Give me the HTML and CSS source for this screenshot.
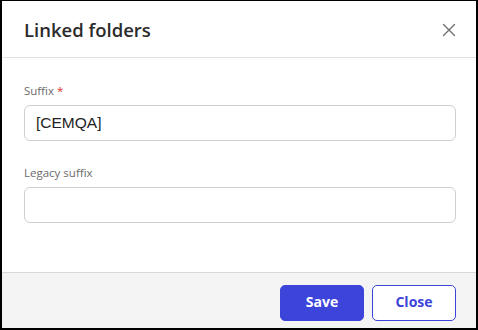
FILE: index.html
```html
<!DOCTYPE html>
<html lang="en">
<head>
    <meta charset="UTF-8">
    <meta name="viewport" content="width=device-width, initial-scale=1.0">
    <title>Linked folders</title>
    <link rel="stylesheet" href="styles.css">
</head>
<body>
    <div class="dialog">
        <div class="dialog-header">
            <h2 class="dialog-title">Linked folders</h2>
            <button class="close-icon" aria-label="Close">
                <svg width="14" height="14" viewBox="0 0 14 14">
                    <path d="M1.5 1.5 L12.5 12.5 M12.5 1.5 L1.5 12.5" stroke="#707070" stroke-width="1.4" fill="none" stroke-linecap="round"/>
                </svg>
            </button>
        </div>

        <div class="dialog-body">
            <div class="field">
                <label for="suffix" class="field-label">Suffix <span class="req">*</span></label>
                <input id="suffix" type="text" value="[CEMQA]">
            </div>
            <div class="field">
                <label for="legacy" class="field-label">Legacy suffix</label>
                <input id="legacy" type="text">
            </div>
        </div>

        <div class="dialog-footer">
            <button class="btn btn-primary">Save</button>
            <button class="btn btn-outline">Close</button>
        </div>
    </div>
</body>
</html>
```

FILE: styles.css
```css
html, body {
    margin: 0;
    padding: 0;
    background: #000;
    font-family: "Open Sans", "Noto Sans", sans-serif;
}

.dialog {
    margin: 1px 2px 2px 2px;
    width: 474px;
    height: 327px;
    background: #fff;
    display: flex;
    flex-direction: column;
}

.dialog-header {
    height: 57px;
    border-bottom: 1px solid #e2e2e2;
    display: flex;
    align-items: center;
    justify-content: space-between;
    padding: 1px 19px 0 22px;
    box-sizing: border-box;
}

.dialog-title {
    margin: 0;
    font-size: 18.5px;
    font-weight: 600;
    color: #2b2b2b;
}

.close-icon {
    background: none;
    border: none;
    padding: 0;
    width: 16px;
    height: 16px;
    display: flex;
    align-items: center;
    justify-content: center;
    cursor: pointer;
}

.dialog-body {
    flex: 1;
    padding: 25px 20px 0 22px;
    display: flex;
    flex-direction: column;
    gap: 24px;
}

.field {
    display: flex;
    flex-direction: column;
}

.field-label {
    font-size: 11.5px;
    line-height: 16px;
    color: #6b6b6b;
    margin-bottom: 6px;
}

.req {
    color: #d9302c;
}

.field input {
    height: 36px;
    box-sizing: border-box;
    border: 1px solid #cfcfcf;
    border-radius: 6px;
    padding: 0 11px;
    font-family: "Liberation Sans", Arial, sans-serif;
    font-size: 15.5px;
    color: #222;
    outline: none;
}

.dialog-footer {
    height: 56px;
    border-top: 1px solid #d8d8d8;
    background: #f4f4f4;
    display: flex;
    justify-content: flex-end;
    align-items: flex-start;
    gap: 8px;
    padding: 12px 20px 0 0;
    box-sizing: border-box;
}

.btn {
    width: 84px;
    height: 36px;
    padding: 0 0 3px 0;
    border-radius: 5px;
    font-family: "Open Sans", "Noto Sans", sans-serif;
    font-size: 14px;
    font-weight: 700;
    cursor: pointer;
}

.btn-primary {
    background: #3c44da;
    color: #fff;
    border: 1px solid #3c44da;
}

.btn-outline {
    background: #fff;
    color: #3c44da;
    border: 1px solid #3c44da;
}
```
